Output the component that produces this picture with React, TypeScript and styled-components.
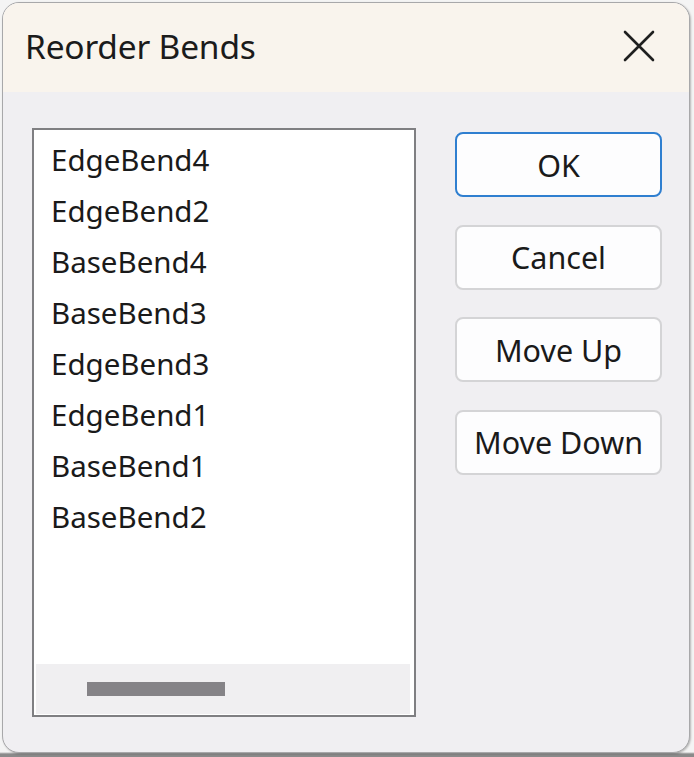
import React from "react";
import styled, { createGlobalStyle } from "styled-components";

const Global = createGlobalStyle`
  html, body { margin: 0; padding: 0; background: #f4f4f4; }
  body { font-family: "Noto Sans", "Open Sans", sans-serif; }
`;

const Page = styled.div`
  width: 694px;
  height: 757px;
  padding: 2px 0 0 2px;
  box-sizing: border-box;
  background: linear-gradient(to bottom, #f4f4f4 0, #f4f4f4 752px, #8a8a8a 754px);
`;

const Dialog = styled.div`
  width: 688px;
  height: 751px;
  box-sizing: border-box;
  border: 1px solid #a8a8aa;
  border-radius: 17px;
  overflow: hidden;
  background: #f0eff2;
  display: flex;
  flex-direction: column;
  box-shadow: 1px 1px 2px rgba(0, 0, 0, 0.25);
`;

const TitleBar = styled.div`
  height: 89px;
  flex: none;
  background: #f9f4ed;
  display: flex;
  align-items: center;
  justify-content: space-between;
  padding: 0 34px 0 22px;
`;

const Title = styled.div`
  font-size: 33.5px;
  color: #1b1b1b;
  letter-spacing: -0.2px;
  margin-top: -3px;
`;

const CloseIcon = styled.svg`
  width: 32px;
  height: 32px;
  margin-top: -4px;
`;

const Body = styled.div`
  flex: 1;
  display: flex;
  padding: 36px 0 0 29px;
  gap: 39px;
`;

const ListBox = styled.div`
  width: 384px;
  height: 589px;
  box-sizing: border-box;
  border: 2px solid #7f7f82;
  background: #ffffff;
  display: flex;
  flex-direction: column;
`;

const Items = styled.div`
  flex: 1;
  padding: 4px 0 0 17px;
`;

const Item = styled.div`
  height: 51px;
  line-height: 51px;
  font-size: 29.5px;
  color: #1a1a1a;
`;

const HScroll = styled.div`
  height: 50px;
  margin: 0 4px 1px 2px;
  background: #f0eff1;
  display: flex;
  align-items: center;
  padding-left: 51px;
`;

const Thumb = styled.div`
  width: 138px;
  height: 14px;
  background: #858387;
`;

const Buttons = styled.div`
  display: flex;
  flex-direction: column;
  gap: 27.5px;
  padding-top: 4px;
`;

const Button = styled.button<{ $primary?: boolean }>`
  width: 207px;
  height: 65px;
  box-sizing: border-box;
  border-radius: 8px;
  border: 2px solid ${(p) => (p.$primary ? "#2f7fd0" : "#d4d4d6")};
  background: #fdfdfe;
  font-family: "Noto Sans", "Open Sans", sans-serif;
  font-size: 30.5px;
  color: #1a1a1a;
  padding: 0;
  cursor: default;
`;

const items = [
  "EdgeBend4",
  "EdgeBend2",
  "BaseBend4",
  "BaseBend3",
  "EdgeBend3",
  "EdgeBend1",
  "BaseBend1",
  "BaseBend2",
];

export default function App() {
  return (
    <Page>
      <Global />
      <Dialog>
        <TitleBar>
          <Title>Reorder Bends</Title>
          <CloseIcon viewBox="0 0 32 32">
            <path d="M2 2 L30 30 M30 2 L2 30" stroke="#1f1f1f" strokeWidth="2.6" strokeLinecap="round" />
          </CloseIcon>
        </TitleBar>
        <Body>
          <ListBox>
            <Items>
              {items.map((t) => (
                <Item key={t}>{t}</Item>
              ))}
            </Items>
            <HScroll>
              <Thumb />
            </HScroll>
          </ListBox>
          <Buttons>
            <Button $primary>OK</Button>
            <Button>Cancel</Button>
            <Button>Move Up</Button>
            <Button>Move Down</Button>
          </Buttons>
        </Body>
      </Dialog>
    </Page>
  );
}
